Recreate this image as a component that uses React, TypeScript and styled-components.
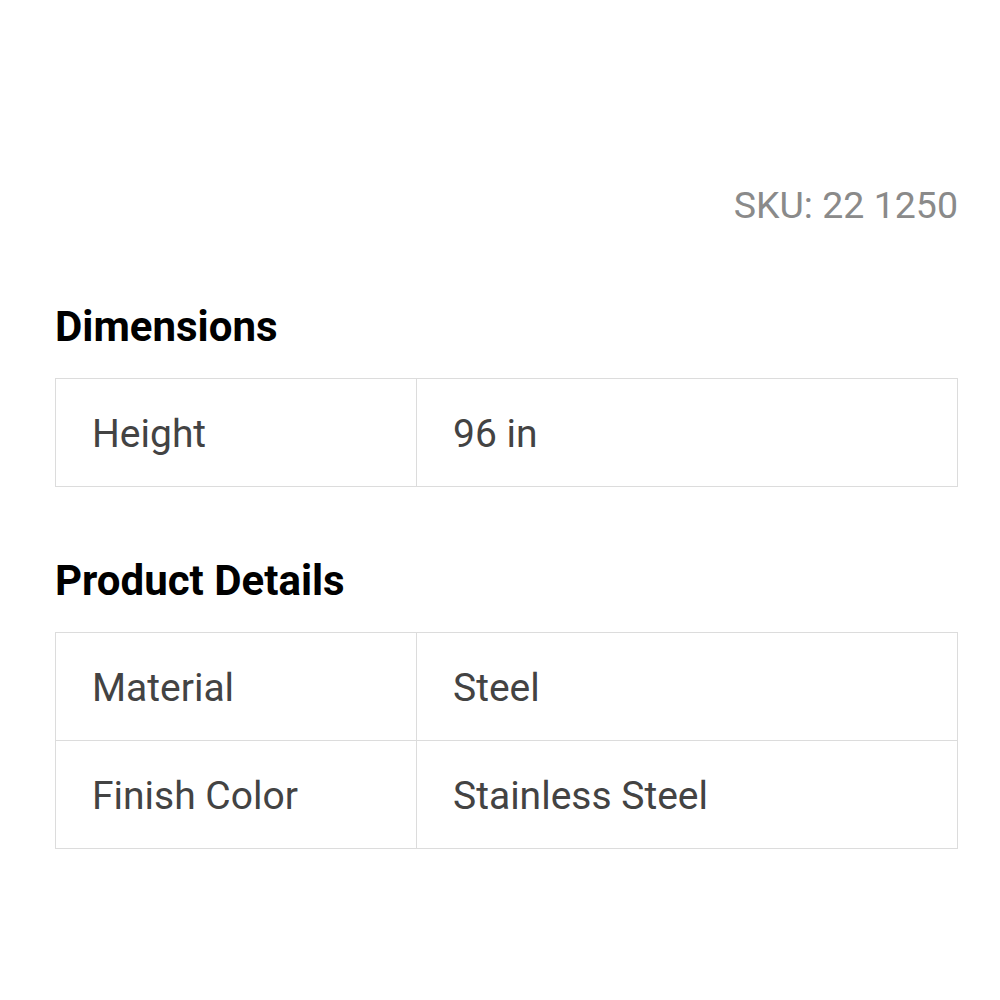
import styled, { createGlobalStyle } from "styled-components";

const GlobalStyle = createGlobalStyle`
  body {
    margin: 0;
    background: #ffffff;
    font-family: Roboto, "Liberation Sans", sans-serif;
  }
`;

const Page = styled.div`
  width: 1000px;
  height: 1000px;
  box-sizing: border-box;
  padding: 180px 42px 0 55px;
`;

const Sku = styled.div`
  text-align: right;
  font-size: 37.5px;
  line-height: 50px;
  color: #8a8a8a;
`;

const SectionTitle = styled.h2<{ $first?: boolean }>`
  margin: 0;
  font-size: 42px;
  font-weight: 700;
  color: #000;
  line-height: 50px;
  padding-top: ${(p) => (p.$first ? "72px" : "69px")};
  padding-bottom: 26px;
`;

const Table = styled.div`
  display: grid;
  grid-template-columns: 361px 1fr;
  border-top: 1px solid #dcdcdc;
  border-left: 1px solid #dcdcdc;
`;

const Cell = styled.div`
  height: 108px;
  display: flex;
  align-items: center;
  box-sizing: border-box;
  padding-left: 36px;
  padding-top: 3px;
  border-right: 1px solid #dcdcdc;
  border-bottom: 1px solid #dcdcdc;
  font-size: 39px;
  color: #434343;
`;

type Row = { label: string; value: string };

const SpecTable = ({ rows }: { rows: Row[] }) => (
  <Table>
    {rows.map((r) => [
      <Cell key={r.label + "-l"}>{r.label}</Cell>,
      <Cell key={r.label + "-v"}>{r.value}</Cell>,
    ])}
  </Table>
);

export default function App() {
  return (
    <>
      <GlobalStyle />
      <Page>
        <Sku>SKU: 22 1250</Sku>
        <SectionTitle $first>Dimensions</SectionTitle>
        <SpecTable rows={[{ label: "Height", value: "96 in" }]} />
        <SectionTitle>Product Details</SectionTitle>
        <SpecTable
          rows={[
            { label: "Material", value: "Steel" },
            { label: "Finish Color", value: "Stainless Steel" },
          ]}
        />
      </Page>
    </>
  );
}
